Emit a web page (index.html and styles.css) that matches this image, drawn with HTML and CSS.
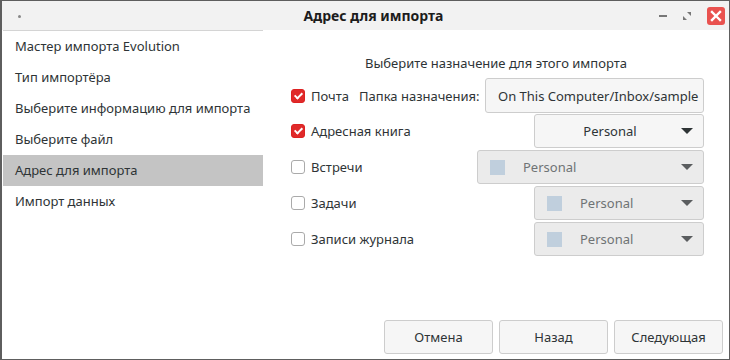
FILE: index.html
```html
<!DOCTYPE html>
<html lang="ru">

<head>
    <meta charset="UTF-8">
    <title>Адрес для импорта</title>
    <link rel="stylesheet" href="styles.css">
</head>

<body>
    <div class="window">
        <div class="titlebar">
            <span class="menu-dot"></span>
            <h1>Адрес для импорта</h1>
            <div class="controls">
                <span class="ctl-min"></span>
                <svg class="ctl-max" width="10" height="10" viewBox="0 0 10 10">
                    <path d="M5 1 L9 1 L9 5 Z M1 5 L1 9 L5 9 Z" fill="#777" />
                </svg>
                <span class="ctl-close">
                    <svg width="12" height="12" viewBox="0 0 12 12">
                        <path d="M2 2 L10 10 M10 2 L2 10" stroke="#fff" stroke-width="2.4" stroke-linecap="square" />
                    </svg>
                </span>
            </div>
        </div>

        <div class="main">
            <ul class="sidebar">
                <li>Мастер импорта Evolution</li>
                <li>Тип импортёра</li>
                <li>Выберите информацию для импорта</li>
                <li>Выберите файл</li>
                <li class="active">Адрес для импорта</li>
                <li>Импорт данных</li>
            </ul>

            <div class="content">
                <p class="heading">Выберите назначение для этого импорта</p>

                <div class="rows">
                    <div class="row">
                        <span class="check on"></span>
                        <span class="label">Почта</span>
                        <span class="label folder-label">Папка назначения:</span>
                        <span class="picker folder">On This Computer/Inbox/sample</span>
                    </div>
                    <div class="row">
                        <span class="check on"></span>
                        <span class="label">Адресная книга</span>
                        <span class="picker combo narrow">
                            <span class="combo-text center">Personal</span>
                            <span class="arrow"></span>
                        </span>
                    </div>
                    <div class="row">
                        <span class="check"></span>
                        <span class="label">Встречи</span>
                        <span class="picker combo wide disabled">
                            <span class="swatch"></span>
                            <span class="combo-text">Personal</span>
                            <span class="arrow"></span>
                        </span>
                    </div>
                    <div class="row">
                        <span class="check"></span>
                        <span class="label">Задачи</span>
                        <span class="picker combo narrow disabled">
                            <span class="swatch"></span>
                            <span class="combo-text">Personal</span>
                            <span class="arrow"></span>
                        </span>
                    </div>
                    <div class="row">
                        <span class="check"></span>
                        <span class="label">Записи журнала</span>
                        <span class="picker combo narrow disabled">
                            <span class="swatch"></span>
                            <span class="combo-text">Personal</span>
                            <span class="arrow"></span>
                        </span>
                    </div>
                </div>

                <div class="buttons">
                    <button>Отмена</button>
                    <button>Назад</button>
                    <button>Следующая</button>
                </div>
            </div>
        </div>
    </div>
</body>

</html>
```

FILE: styles.css
```css
body, html {
    margin: 0;
    padding: 0;
    font-family: 'Noto Sans', sans-serif;
    font-size: 13px;
    color: #2e3436;
    background-color: #fff;
}

.window {
    width: 730px;
    height: 360px;
    box-sizing: border-box;
    border: 1px solid #5e5e5e;
    border-left-width: 2px;
    display: flex;
    flex-direction: column;
    background-color: #fff;
}

.titlebar {
    height: 29px;
    background-color: #f2f2f2;
    display: flex;
    align-items: center;
    position: relative;
    flex-shrink: 0;
}

.titlebar h1 {
    flex: 1;
    margin: 0;
    text-align: center;
    font-size: 14px;
    font-weight: bold;
    color: #1c1c1c;
    padding-left: 16px;
}

.menu-dot {
    position: absolute;
    left: 16px;
    top: 14px;
    width: 3px;
    height: 3px;
    border-radius: 50%;
    background-color: #888;
}

.controls {
    position: absolute;
    right: 4px;
    top: 6px;
    display: flex;
    align-items: center;
    gap: 15px;
}

.ctl-min {
    width: 8px;
    height: 2px;
    background-color: #777;
}

.ctl-close {
    width: 18px;
    height: 18px;
    border-radius: 3px;
    background-color: #e9524f;
    display: flex;
    align-items: center;
    justify-content: center;
}

.main {
    flex: 1;
    display: flex;
    min-height: 0;
}

.sidebar {
    list-style: none;
    margin: 0;
    padding: 0;
    width: 260px;
    margin-left: 1px;
    border-top: 1px solid #d4d4d4;
}

.sidebar li {
    height: 31px;
    line-height: 31px;
    padding-left: 12px;
    color: #2e3436;
}

.sidebar li.active {
    background-color: #c4c4c4;
}

.content {
    flex: 1;
    display: flex;
    flex-direction: column;
    padding: 0 6px 5px 28px;
}

.heading {
    margin: 24px 0 6px;
    padding-right: 22px;
    text-align: center;
    line-height: 18px;
}

.rows {
    display: flex;
    flex-direction: column;
    gap: 2px;
    padding-right: 19px;
}

.row {
    height: 34px;
    display: flex;
    align-items: center;
}

.row:first-child {
    height: 35px;
    margin-bottom: -1px;
}

.check {
    width: 12px;
    height: 12px;
    border: 1.5px solid #aaa;
    border-radius: 3px;
    background-color: #fff;
    margin-right: 6px;
    flex-shrink: 0;
    position: relative;
}

.check.on {
    background-color: #e02a2a;
    border-color: #d22;
}

.check.on::after {
    content: "";
    position: absolute;
    left: 3.5px;
    top: 1px;
    width: 3px;
    height: 6px;
    border: solid #fff;
    border-width: 0 2px 2px 0;
    transform: rotate(45deg);
}

.label {
    color: #2e3436;
}

.folder-label {
    margin-left: 10px;
}

.picker {
    margin-left: auto;
    box-sizing: border-box;
    height: 100%;
    border: 1px solid #cdcdcd;
    border-radius: 3px;
    background-color: #f6f6f6;
    display: flex;
    align-items: center;
    color: #2e3436;
}

.folder {
    width: 219px;
    padding-left: 12px;
    white-space: nowrap;
    overflow: hidden;
}

.combo {
    padding: 0 10px 0 12px;
}

.combo.narrow {
    width: 170px;
}

.combo.wide {
    width: 227px;
}

.combo.disabled {
    background-color: #ebebeb;
}

.combo.disabled .combo-text {
    color: #6f7375;
}

.combo-text {
    flex: 1;
    padding-left: 18px;
}

.combo-text.center {
    text-align: center;
    padding-left: 0;
}

.swatch {
    width: 15px;
    height: 15px;
    background-color: #c0cfdd;
    flex-shrink: 0;
}

.arrow {
    width: 0;
    height: 0;
    border-left: 6px solid transparent;
    border-right: 6px solid transparent;
    border-top: 6px solid #2e3436;
    margin-left: 8px;
}

.combo.disabled .arrow {
    border-top-color: #5a5d5f;
}

.buttons {
    margin-top: auto;
    display: flex;
    justify-content: flex-end;
    gap: 6px;
}

.buttons button {
    width: 109px;
    height: 34px;
    font-family: 'Noto Sans', sans-serif;
    font-size: 13px;
    color: #2e3436;
    background-color: #f6f6f6;
    border: 1px solid #cdcdcd;
    border-radius: 3px;
}
```
